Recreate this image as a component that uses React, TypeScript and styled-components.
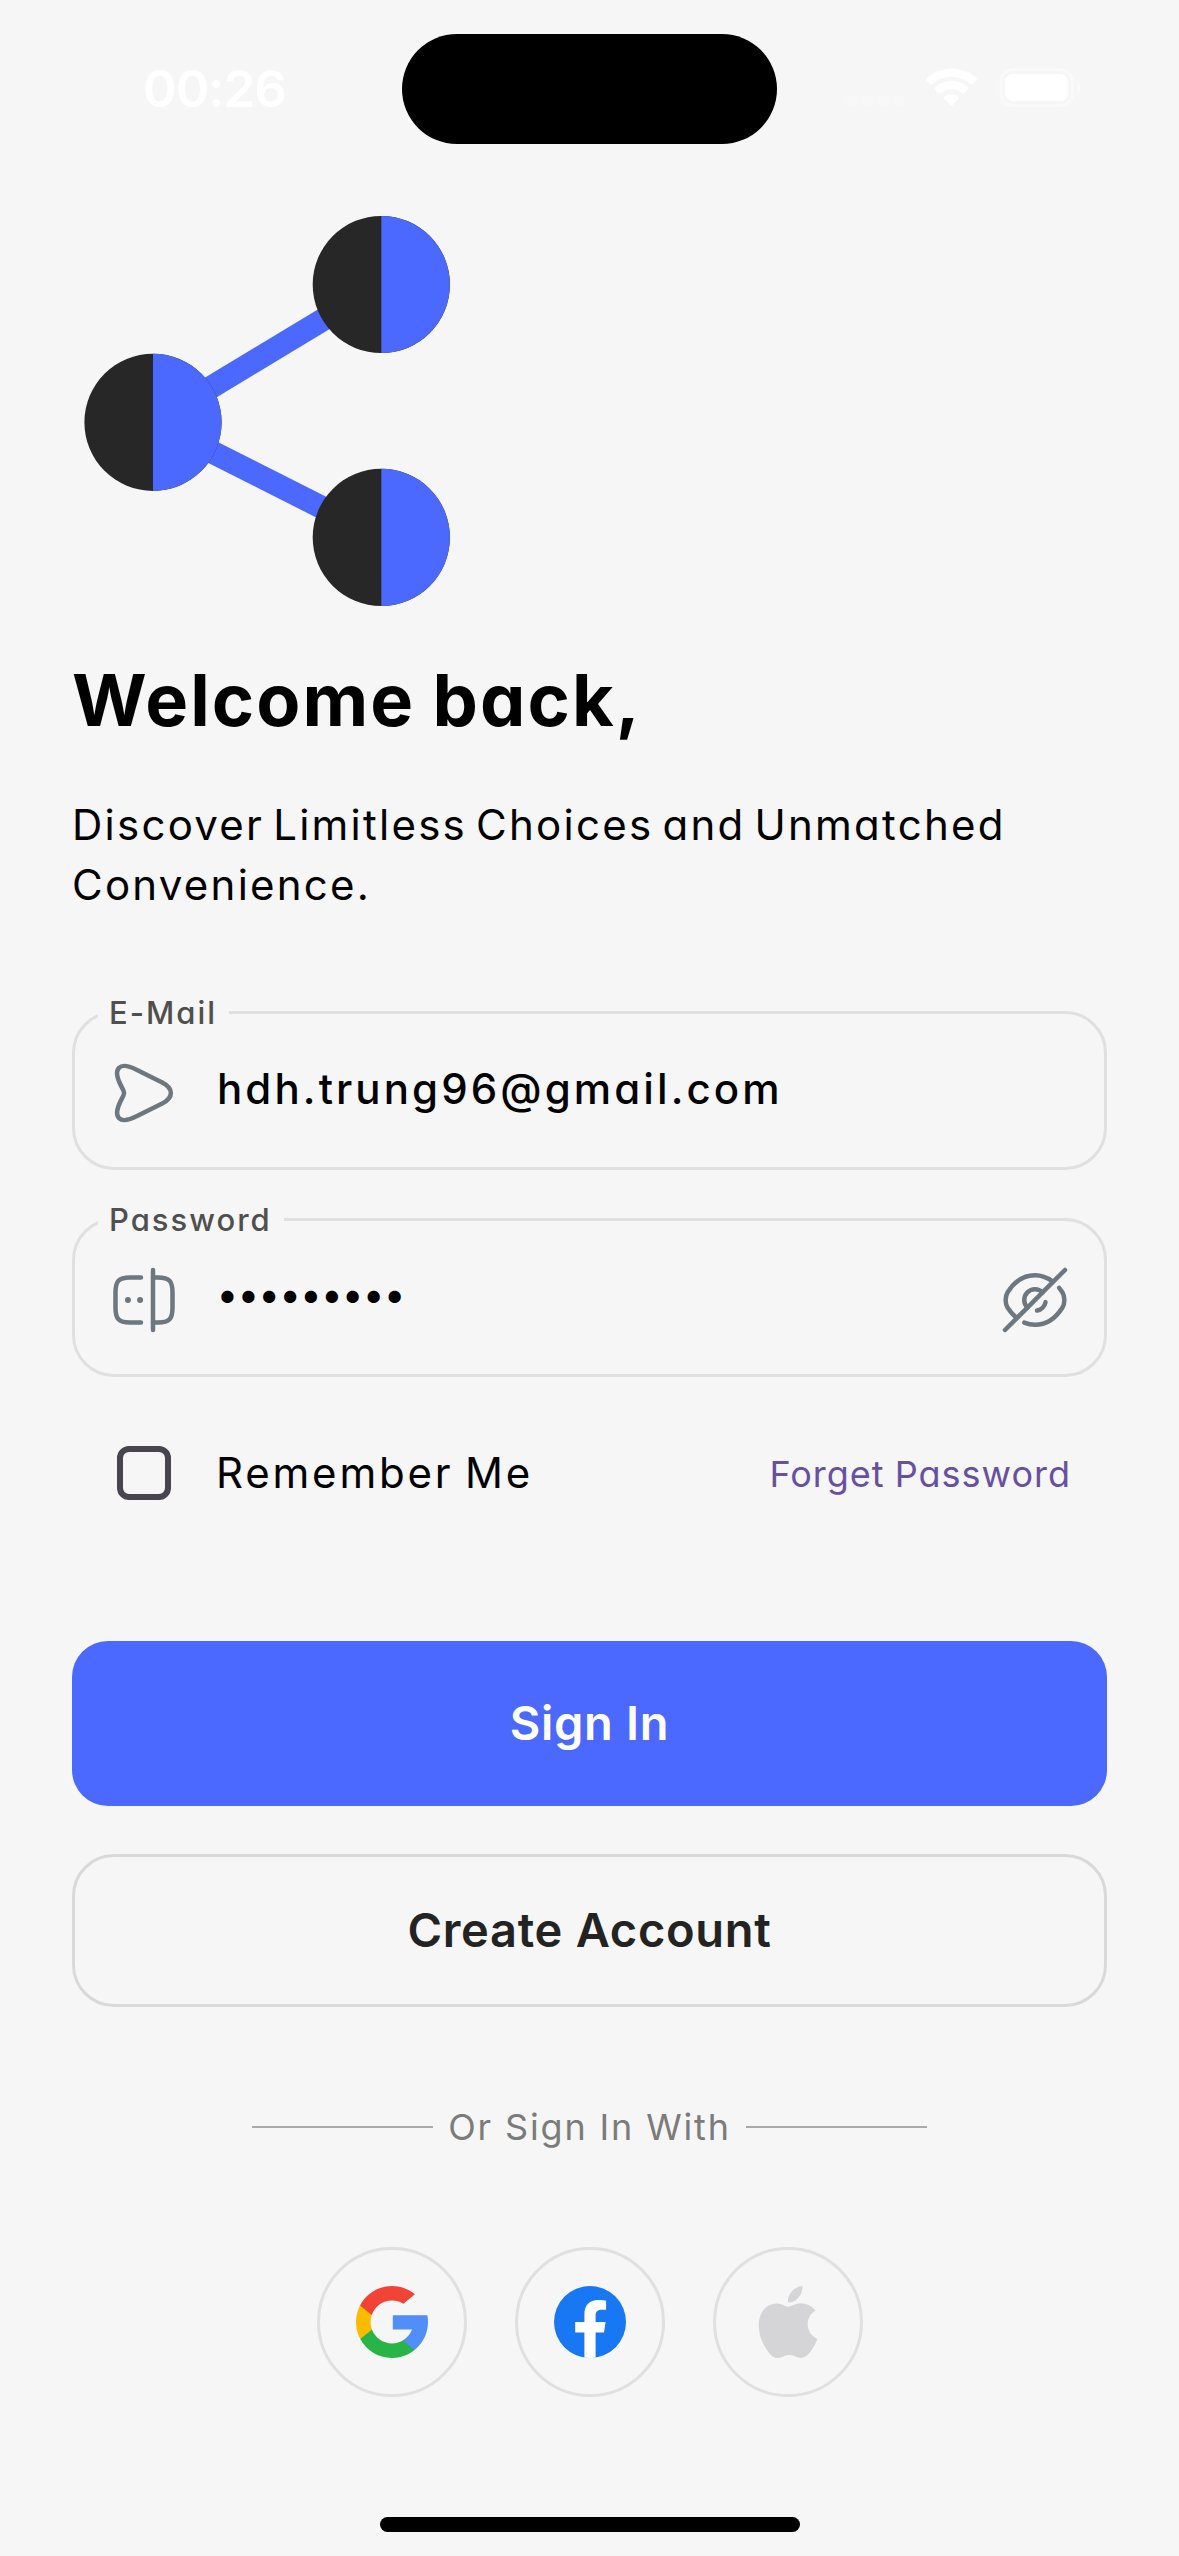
import React from "react";
import styled, { createGlobalStyle } from "styled-components";

const GlobalStyle = createGlobalStyle`
  *, *::before, *::after { box-sizing: border-box; }
  body {
    margin: 0;
    background: #f6f6f6;
    font-family: Inter, "Noto Sans", sans-serif;
    font-feature-settings: "cv11" 1, "calt" 0;
    -webkit-font-smoothing: antialiased;
  }
`;

const Screen = styled.main`
  width: 1179px;
  height: 2556px;
  display: flex;
  flex-direction: column;
  background: #f6f6f6;
  overflow: hidden;
`;

const StatusBar = styled.header`
  height: 206px;
  padding-top: 34px;
  display: flex;
  align-items: flex-start;
`;

const Clock = styled.div`
  width: 402px;
  height: 110px;
  padding: 0 0 2px 143px;
  display: flex;
  align-items: center;
  color: #ffffff;
  font-size: 51px;
  font-weight: 600;
  letter-spacing: -1px;
`;

const Island = styled.div`
  width: 375px;
  height: 110px;
  border-radius: 55px;
  background: #000000;
`;

const StatusIcons = styled.div`
  flex: 1;
  height: 110px;
  padding: 34px 0 0 69px;
`;

const Content = styled.section`
  display: flex;
  flex-direction: column;
  padding: 0 72px;
`;

const Logo = styled.svg`
  width: 390px;
  height: 410px;
  display: block;
`;

const Title = styled.h1`
  margin: 42px 0 0;
  font-size: 72px;
  line-height: 84px;
  font-weight: 650;
  letter-spacing: 2.1px;
  word-spacing: -2px;
  color: #000000;
`;

const Subtitle = styled.p`
  margin: 53px 0 0;
  font-size: 42px;
  line-height: 60px;
  font-weight: 400;
  letter-spacing: 2.25px;
  word-spacing: -5px;
  white-space: nowrap;
  color: #000000;
`;

const Form = styled.div`
  margin-top: 79px;
  display: flex;
  flex-direction: column;
  gap: 31px;
`;

const Field = styled.fieldset`
  margin: 0;
  min-width: 0;
  height: 176px;
  padding: 0 33px 13px 23px;
  border: 3px solid #e0e0e0;
  border-radius: 42px;
`;

const Label = styled.legend<{ $width: number }>`
  width: ${(p) => p.$width}px;
  height: 37px;
  padding: 0 0 0 11px;
  font-size: 31px;
  line-height: 37px;
  font-weight: 500;
  letter-spacing: 2px;
  color: #4f4f4f;
  white-space: nowrap;
`;

const FieldRow = styled.div`
  height: 123px;
  padding-left: 10px;
  display: flex;
  align-items: center;
`;

const FieldIcon = styled.svg`
  width: 72px;
  height: 72px;
  flex: none;
  fill: none;
  stroke: #6c7780;
  stroke-width: 1.5;
  stroke-linecap: round;
  stroke-linejoin: round;
`;

const FieldValue = styled.div<{ $masked?: boolean }>`
  flex: 1;
  padding: 0 0 ${(p) => (p.$masked ? 11 : 7)}px 37px;
  font-size: ${(p) => (p.$masked ? 39 : 42)}px;
  line-height: 60px;
  font-weight: 500;
  letter-spacing: ${(p) => (p.$masked ? 0.1 : 3.1)}px;
  color: #000000;
`;

const Options = styled.div`
  margin-top: 69px;
  height: 54px;
  padding: 0 36px 0 45px;
  display: flex;
  align-items: center;
`;

const Checkbox = styled.span`
  width: 54px;
  height: 54px;
  border: 6px solid #49454f;
  border-radius: 12px;
`;

const Remember = styled.span`
  margin-left: 45px;
  font-size: 42px;
  line-height: 54px;
  letter-spacing: 2.8px;
  word-spacing: -3px;
  color: #000000;
`;

const Forgot = styled.a`
  margin-left: auto;
  padding-top: 2px;
  font-size: 36px;
  line-height: 54px;
  letter-spacing: 1px;
  word-spacing: -1px;
  color: #6750a4;
`;

const Button = styled.button<{ $primary?: boolean }>`
  margin: ${(p) => (p.$primary ? "141px 0 0" : "48px 0 0")};
  padding: 0 0 2px;
  height: ${(p) => (p.$primary ? 165 : 153)}px;
  border: ${(p) => (p.$primary ? "none" : "3px solid #d9d9d9")};
  border-radius: ${(p) => (p.$primary ? 36 : 42)}px;
  background: ${(p) => (p.$primary ? "#4b68ff" : "transparent")};
  color: ${(p) => (p.$primary ? "#ffffff" : "#232323")};
  font-family: inherit;
  font-size: 47px;
  font-weight: 600;
  letter-spacing: 0.7px;
  font-feature-settings: normal;
`;

const Divider = styled.div`
  margin-top: 96px;
  height: 48px;
  display: flex;
  align-items: center;
  justify-content: center;
`;

const Rule = styled.span`
  width: 181px;
  height: 2px;
  background: #aaaaaa;
`;

const DividerText = styled.span`
  width: 313px;
  padding-bottom: 1px;
  text-align: center;
  font-size: 36px;
  line-height: 48px;
  letter-spacing: 1.85px;
  white-space: nowrap;
  color: #7b7b7b;
`;

const Socials = styled.div`
  margin-top: 96px;
  display: flex;
  justify-content: center;
  gap: 48px;
`;

const SocialButton = styled.button`
  width: 150px;
  height: 150px;
  padding: 0;
  display: flex;
  align-items: center;
  justify-content: center;
  border: 3px solid #e0e0e0;
  border-radius: 50%;
  background: transparent;
`;

const HomeBar = styled.div`
  width: 420px;
  height: 15px;
  margin: 120px auto 0;
  border-radius: 8px;
  background: #000000;
`;

const nodes = [
  { x: 153, y: 422.3 },
  { x: 381.3, y: 284.5 },
  { x: 381.3, y: 537.4 },
];
const R = 68.6;

function ShareLogo() {
  return (
    <Logo viewBox="72 206 390 410">
      <g stroke="#4b68ff" strokeWidth="23">
        <path d={`M${nodes[0].x} ${nodes[0].y}L${nodes[1].x} ${nodes[1].y}`} />
        <path d={`M${nodes[0].x} ${nodes[0].y}L${nodes[2].x} ${nodes[2].y}`} />
      </g>
      {nodes.map((n) => (
        <g key={n.y}>
          <circle cx={n.x} cy={n.y} r={R} fill="#272727" />
          <path d={`M${n.x} ${n.y - R}a${R} ${R} 0 0 1 0 ${R * 2}z`} fill="#4b68ff" />
        </g>
      ))}
    </Logo>
  );
}

function StatusGlyphs() {
  return (
    <svg width="236" height="40" viewBox="846 68 236 40">
      <g fill="#ffffff" fillOpacity="0.22">
        <rect x="846" y="96" width="10.5" height="10.5" rx="3.5" />
        <rect x="862" y="96" width="10.5" height="10.5" rx="3.5" />
        <rect x="878" y="96" width="10.5" height="10.5" rx="3.5" />
        <rect x="894" y="96" width="10.5" height="10.5" rx="3.5" />
      </g>
      <path d="M1077 81.500c5 2 5 10.500 0 12.500z" fill="#ffffff" fillOpacity="0.42" />
      <g fill="#ffffff">
        <path d="M951.500 76.800c7.400 0 14 2.800 19.200 7.400.6.500 1.400.5 2 0l3.700-3.800c.6-.6.6-1.600 0-2.200a36.500 36.500 0 0 0-49.800 0c-.6.6-.6 1.600 0 2.200l3.700 3.800c.6.5 1.400.5 2 0a28.600 28.600 0 0 1 19.200-7.400z" />
        <path d="M951.500 89.200c4 0 7.700 1.500 10.500 4 .6.6 1.500.6 2.100 0l3.700-3.800c.6-.6.6-1.600 0-2.200a24 24 0 0 0-32.600 0c-.6.6-.6 1.600 0 2.200l3.700 3.800c.6.6 1.500.6 2.100 0 2.800-2.500 6.500-4 10.500-4z" />
        <path d="M958.600 98.500c.6-.6.6-1.500-.1-2.100a11 11 0 0 0-14 0c-.7.6-.7 1.500-.1 2.100l6 6.700c.6.600 1.600.6 2.200 0z" />
        <rect x="1005" y="74" width="63" height="27" rx="8" />
      </g>
      <rect x="1000.800" y="69.700" width="71.600" height="35.800" rx="12" fill="none" stroke="#ffffff" strokeOpacity="0.42" strokeWidth="3" />
    </svg>
  );
}

function SendIcon() {
  return (
    <FieldIcon viewBox="0 0 24 24">
      <path d="M9.510 4.230L18.070 8.510C21.910 10.430 21.910 13.570 18.070 15.490L9.510 19.770C3.750 22.650 1.400 20.290 4.280 14.540L5.150 12.810C5.370 12.370 5.370 11.640 5.150 11.200L4.280 9.460C1.400 3.710 3.760 1.350 9.510 4.230Z" />
    </FieldIcon>
  );
}

function PasswordIcon() {
  return (
    <FieldIcon viewBox="0 0 24 24">
      <path d="M11 19.500H7.300C3.500 19.500 2.500 18.300 2.500 14.500V9.500C2.500 5.700 3.500 4.500 7.300 4.500H11" />
      <path d="M15 4.500H16.700C20.500 4.500 21.500 5.700 21.500 9.500V14.500C21.500 18.300 20.500 19.500 16.700 19.500H15" />
      <path d="M15 2V22" />
      <path strokeWidth="2" d="M10.690 12H10.700M6.640 12H6.650" />
    </FieldIcon>
  );
}

function EyeSlashIcon() {
  return (
    <FieldIcon viewBox="0 0 24 24">
      <path d="M14.530 9.470L9.470 14.530C8.820 13.880 8.420 12.990 8.420 12C8.420 10.020 10.020 8.420 12 8.420C12.990 8.420 13.880 8.820 14.530 9.470Z" />
      <path d="M17.820 5.770C16.070 4.450 14.070 3.730 12 3.730C8.470 3.730 5.180 5.810 2.890 9.410C1.990 10.820 1.990 13.190 2.890 14.600C3.680 15.840 4.600 16.910 5.600 17.770" />
      <path d="M8.420 19.530C9.560 20.010 10.770 20.270 12 20.270C15.530 20.270 18.820 18.190 21.110 14.590C22.010 13.180 22.010 10.810 21.110 9.400C20.780 8.880 20.420 8.390 20.050 7.930" />
      <path d="M15.510 12.700C15.250 14.110 14.100 15.260 12.690 15.520" />
      <path d="M9.470 14.530L2 22M22 2L14.530 9.470" />
    </FieldIcon>
  );
}

function GoogleIcon() {
  return (
    <svg width="72" height="72" viewBox="0 0 512 512">
      <path fill="#FBBB00" d="M113.470,309.408L95.648,375.940l-65.139,1.378C11.042,341.211,0,299.900,0,256c0-42.451,10.324-82.483,28.624-117.732h0.014l57.992,10.632l25.404,57.644c-5.317,15.501-8.215,32.141-8.215,49.456C103.821,274.792,107.225,292.797,113.470,309.408z" />
      <path fill="#518EF8" d="M507.527,208.176C510.467,223.662,512,239.655,512,256c0,18.328-1.927,36.206-5.598,53.451c-12.462,58.683-45.025,109.925-90.134,146.187l-0.014-0.014l-73.044-3.727l-10.338-64.535c29.932-17.554,53.324-45.025,65.646-77.911h-136.890V208.176h138.887L507.527,208.176z" />
      <path fill="#28B446" d="M416.253,455.624l0.014,0.014C372.396,490.901,316.666,512,256,512c-97.491,0-182.252-54.491-225.491-134.681l82.961-67.910c21.619,57.698,77.278,98.771,142.530,98.771c28.047,0,54.323-7.582,76.870-20.818L416.253,455.624z" />
      <path fill="#F14336" d="M419.404,58.936l-82.933,67.896c-23.335-14.586-50.919-23.012-80.471-23.012c-66.729,0-123.429,42.957-143.965,102.724l-83.397-68.276h-0.014C71.230,56.123,157.060,0,256,0C318.115,0,375.068,22.126,419.404,58.936z" />
    </svg>
  );
}

function FacebookIcon() {
  return (
    <svg width="72" height="72" viewBox="0 0 72 72">
      <circle cx="36" cy="36" r="36" fill="#1877f2" />
      <path fill="#ffffff" d="M50 46.400L51.600 36H41.600V29.300C41.600 26.400 43 23.700 47.500 23.700H52.100V14.800S47.900 14.100 44 14.100C35.800 14.100 30.400 19.100 30.400 28.100V36H21.200V46.400H30.400V71.600A36.500 36.500 0 0 0 41.600 71.600V46.400Z" />
    </svg>
  );
}

function AppleIcon() {
  return (
    <svg width="72" height="72" viewBox="0 0 24 24" fill="#d5d5d7">
      <path d="M12.152 6.896c-.948 0-2.415-1.078-3.960-1.040-2.040.027-3.910 1.183-4.961 3.014-2.117 3.675-.546 9.103 1.519 12.090 1.013 1.454 2.208 3.090 3.792 3.039 1.520-.065 2.090-.987 3.935-.987 1.831 0 2.350.987 3.960.948 1.637-.026 2.676-1.480 3.676-2.948 1.156-1.688 1.636-3.325 1.662-3.415-.039-.013-3.182-1.221-3.220-4.857-.026-3.040 2.480-4.494 2.597-4.559-1.429-2.090-3.623-2.324-4.390-2.376-2-.156-3.675 1.090-4.610 1.090zM15.530 3.830c.843-1.012 1.400-2.427 1.245-3.830-1.207.052-2.662.805-3.532 1.818-.780.896-1.454 2.338-1.273 3.714 1.338.104 2.715-.688 3.559-1.701" />
    </svg>
  );
}

export default function App() {
  return (
    <>
      <GlobalStyle />
      <Screen>
        <StatusBar>
          <Clock>00:26</Clock>
          <Island />
          <StatusIcons>
            <StatusGlyphs />
          </StatusIcons>
        </StatusBar>
        <Content>
          <ShareLogo />
          <Title>Welcome back,</Title>
          <Subtitle>
            Discover Limitless Choices and Unmatched
            <br />
            Convenience.
          </Subtitle>
          <Form>
            <Field>
              <Label $width={131}>E-Mail</Label>
              <FieldRow>
                <SendIcon />
                <FieldValue>hdh.trung96@gmail.com</FieldValue>
              </FieldRow>
            </Field>
            <Field>
              <Label $width={186}>Password</Label>
              <FieldRow>
                <PasswordIcon />
                <FieldValue $masked>•••••••••</FieldValue>
                <EyeSlashIcon />
              </FieldRow>
            </Field>
          </Form>
          <Options>
            <Checkbox role="checkbox" aria-checked="false" />
            <Remember>Remember Me</Remember>
            <Forgot>Forget Password</Forgot>
          </Options>
          <Button $primary>Sign In</Button>
          <Button>Create Account</Button>
          <Divider>
            <Rule />
            <DividerText>Or Sign In With</DividerText>
            <Rule />
          </Divider>
          <Socials>
            <SocialButton aria-label="Google">
              <GoogleIcon />
            </SocialButton>
            <SocialButton aria-label="Facebook">
              <FacebookIcon />
            </SocialButton>
            <SocialButton aria-label="Apple">
              <AppleIcon />
            </SocialButton>
          </Socials>
        </Content>
        <HomeBar />
      </Screen>
    </>
  );
}
